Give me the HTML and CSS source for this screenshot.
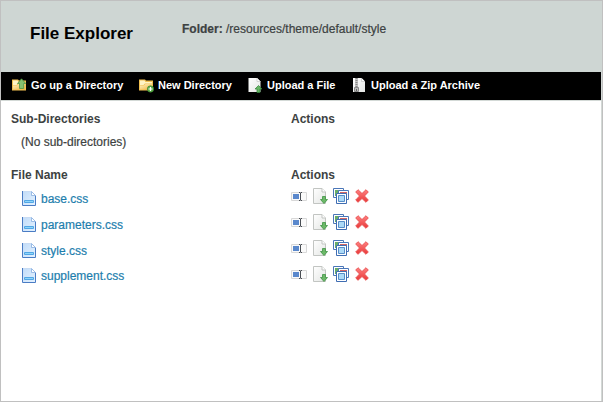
FILE: index.html
```
<!DOCTYPE html>
<html lang="en">
<head>
<meta charset="utf-8">
<title>File Explorer</title>
<link rel="stylesheet" href="styles.css">
</head>
<body>
<svg class="defs" aria-hidden="true">
  <defs>
    <linearGradient id="gold" x1="0" y1="0" x2="1" y2="1"><stop offset="0" stop-color="#fff3c4"/><stop offset="1" stop-color="#eeb23c"/></linearGradient>
    <linearGradient id="sheet" x1="0" y1="0" x2="1" y2="1"><stop offset="0" stop-color="#ffffff"/><stop offset="1" stop-color="#e4e6e4"/></linearGradient>
    <linearGradient id="sky" x1="0" y1="0" x2="1" y2="1"><stop offset="0" stop-color="#c2dcf8"/><stop offset="1" stop-color="#e2f1ff"/></linearGradient>
    <linearGradient id="red" x1="0" y1="0" x2="0" y2="1"><stop offset="0" stop-color="#ff8080"/><stop offset="1" stop-color="#e83838"/></linearGradient>
    <symbol id="file" viewBox="0 0 14 15">
      <path d="M1 0h8l4 4v10H1z" fill="url(#sky)"/>
      <path d="M.5 0v14.500h13V4.500" fill="none" stroke="#4a7cc4"/>
      <path d="M1 .5h8" stroke="#c8dcf4"/>
      <path d="M9.500.5v4h4z" fill="#fff" stroke="#86ade0" stroke-width=".8"/>
      <path d="M2.500 9.500h9v2h-9z" fill="#8dd6fb" stroke="#52a6e4"/>
    </symbol>
    <symbol id="rename" viewBox="0 0 16 9">
      <path d="M.5.5h15v8H.5z" fill="#fafafa" stroke="#d8d8d8"/>
      <path d="M2 2h6v5H2z" fill="#5a88cc"/>
      <path d="M8 .5h1l.5.5.5-.5h1M8 8.500h1l.5-.5.5.5h1M9.500 1v7" fill="none" stroke="#4a4e54"/>
    </symbol>
    <symbol id="download" viewBox="0 0 15 16">
      <path d="M.5.5H9L12.500 4v11.500H.5z" fill="url(#sheet)" stroke="#c2c5c2"/>
      <path d="M9 .5V4h3.500" fill="#fff" stroke="#c2c5c2"/>
      <path d="M9.500 8.500h3v3h2l-3.500 4-3.500-4h2z" fill="#6cb868" stroke="#3f9444" stroke-width=".8"/>
    </symbol>
    <symbol id="copy" viewBox="0 0 16 16">
      <path d="M.5.5h10v9H.5z" fill="#fff" stroke="#4a76b8"/><path d="M2 2h7v6H2z" fill="#69ad69"/>
      <path d="M5.500 2.500h10v9h-10z" fill="#fff" stroke="#4a76b8"/><path d="M7 4h7v6H7z" fill="#d46463"/>
      <path d="M3.500 5.500h10v10h-10z" fill="#fff" stroke="#3f6db2"/><path d="M5.500 7.500h6v6h-6z" fill="#acd9f7" stroke="#568dc8"/>
    </symbol>
    <symbol id="delete" viewBox="0 0 14 14">
      <path d="M3 .7 7 4.500 11 .7 13.300 3 9.500 7l3.800 4-2.300 2.300L7 9.500l-4 3.800L.7 11l3.800-4L.7 3z" fill="url(#red)" stroke="#e85050" stroke-width=".9"/>
    </symbol>
    <symbol id="folder" viewBox="0 0 15 14">
      <path d="M0 1h6l1 1h7v10H0z" fill="#f1bf50"/>
      <path d="M1 2h4.500l1 1.500H13V5H6L4.500 6.500H1z" fill="#fff4c5"/>
      <path d="M1 7h4l1.500-1.500H13V11H1z" fill="url(#gold)"/>
    </symbol>
    <symbol id="folder-up" viewBox="0 0 15 14">
      <use href="#folder" width="15" height="14"/>
      <path d="M9.500.3 13.700 5h-2v5H7.500V5h-2z" fill="#86c070" stroke="#4c9444" stroke-width=".8"/>
    </symbol>
    <symbol id="folder-new" viewBox="0 0 15 14">
      <use href="#folder" width="15" height="14"/>
      <circle cx="11.500" cy="10.500" r="3.200" fill="#5fac48" stroke="#347f2e" stroke-width=".6"/>
      <path d="M11.500 8.500v4M9.500 10.500h4" stroke="#fff" stroke-width="1.200"/>
    </symbol>
    <symbol id="upload" viewBox="0 0 14 15">
      <path d="M0 0h8.500L12 3.500V14H0z" fill="url(#sheet)"/><path d="M8.500 0v3.500H12" fill="#fff" stroke="#bbb" stroke-width=".6"/>
      <path d="M10 7.500 13.500 11h-2v3.500h-3V11h-2z" fill="#66b464" stroke="#328238" stroke-width=".7"/>
    </symbol>
    <symbol id="zip" viewBox="0 0 13 15">
      <path d="M0 0h8.500L12 3.500V14H0z" fill="url(#sheet)"/><path d="M8.500 0v3.500H12" fill="#fff" stroke="#bbb" stroke-width=".6"/>
      <path d="M2 0h3v14H2z" fill="#c4c4c4"/><path d="M3.500 0v9" stroke="#888" stroke-width="2" stroke-dasharray="1 1"/>
      <path d="M1.500 9.500h4v4h-4z" fill="#bbb" stroke="#888"/><path d="M3 11h1v2H3z" fill="#666"/>
    </symbol>
  </defs>
</svg>
<div class="window">
  <header class="header">
    <h1 class="title">File Explorer</h1>
    <p class="path"><b>Folder:</b> /resources/theme/default/style</p>
  </header>
  <nav class="toolbar">
    <a class="tool tool-up"><svg class="tool-icon"><use href="#folder-up"/></svg><span>Go up a Directory</span></a>
    <a class="tool tool-new"><svg class="tool-icon"><use href="#folder-new"/></svg><span>New Directory</span></a>
    <a class="tool tool-upload"><svg class="tool-icon"><use href="#upload"/></svg><span>Upload a File</span></a>
    <a class="tool"><svg class="tool-icon"><use href="#zip"/></svg><span>Upload a Zip Archive</span></a>
  </nav>
  <main class="content">
    <section class="directories">
      <div class="row heading"><h2 class="label">Sub-Directories</h2><h2 class="label">Actions</h2></div>
      <p class="empty">(No sub-directories)</p>
    </section>
    <section>
      <div class="row heading"><h2 class="label">File Name</h2><h2 class="label">Actions</h2></div>
      <div class="row file"><a class="name"><svg class="file-icon"><use href="#file"/></svg><span>base.css</span></a><div class="actions"><svg class="rename"><use href="#rename"/></svg><svg class="download"><use href="#download"/></svg><svg class="copy"><use href="#copy"/></svg><svg class="delete"><use href="#delete"/></svg></div></div>
      <div class="row file"><a class="name"><svg class="file-icon"><use href="#file"/></svg><span>parameters.css</span></a><div class="actions"><svg class="rename"><use href="#rename"/></svg><svg class="download"><use href="#download"/></svg><svg class="copy"><use href="#copy"/></svg><svg class="delete"><use href="#delete"/></svg></div></div>
      <div class="row file"><a class="name"><svg class="file-icon"><use href="#file"/></svg><span>style.css</span></a><div class="actions"><svg class="rename"><use href="#rename"/></svg><svg class="download"><use href="#download"/></svg><svg class="copy"><use href="#copy"/></svg><svg class="delete"><use href="#delete"/></svg></div></div>
      <div class="row file file-last"><a class="name"><svg class="file-icon"><use href="#file"/></svg><span>supplement.css</span></a><div class="actions"><svg class="rename"><use href="#rename"/></svg><svg class="download"><use href="#download"/></svg><svg class="copy"><use href="#copy"/></svg><svg class="delete"><use href="#delete"/></svg></div></div>
    </section>
  </main>
</div>
</body>
</html>
```
FILE: styles.css
```
* { box-sizing: border-box; }
body { margin: 0; font: 12px/16px "Liberation Sans", Arial, sans-serif; color: #3d4242; }
h1, h2, p { margin: 0; }
svg { display: block; flex: none; }
.defs { position: absolute; width: 0; height: 0; }
.window { width: 603px; height: 402px; border: 1px solid #c0c0c0; background: #fff; overflow: hidden; box-shadow: inset -1px 0 #d3d9d6; }
.header { display: flex; height: 71px; padding: 20px 0 0 29px; background: #ced6d3; }
.title { width: 152px; padding-top: 3px; font-size: 17px; line-height: 20px; color: #000; }
.path, .empty, .name { -webkit-text-stroke: 0.2px currentColor; }
.toolbar { display: flex; width: 600px; height: 29px; padding: 5px 0 0 11px; background: #000; border-bottom: 1px solid #d3d9d6; color: #fff; font-size: 11px; font-weight: bold; }
.tool { display: flex; white-space: nowrap; }
.tool-icon { width: 15px; height: 15px; margin: 1px 4px 0 0; }
.tool-up { width: 127px; }
.tool-new { width: 109px; }
.tool-upload { width: 104px; }
.content { padding: 10px 0 0 10px; }
.directories { height: 56px; }
.row { display: grid; grid-template-columns: 280px 1fr; }
.label { font-size: 12px; line-height: 16px; }
.empty { padding: 7px 0 0 10px; }
.file { height: 26px; padding-top: 5px; }
.name { display: flex; padding: 3px 0 0 11px; color: #1d7ead; }
.file-icon { width: 14px; height: 15px; margin-right: 5px; }
.file-last .name { padding-top: 2px; }
.actions { display: flex; align-items: flex-start; }
.rename { width: 16px; height: 9px; margin: 4px 6px 0 0; }
.download { width: 15px; height: 16px; margin-right: 5px; }
.copy { width: 16px; height: 16px; margin-right: 6px; }
.delete { width: 14px; height: 14px; margin-top: 1px; }
```
